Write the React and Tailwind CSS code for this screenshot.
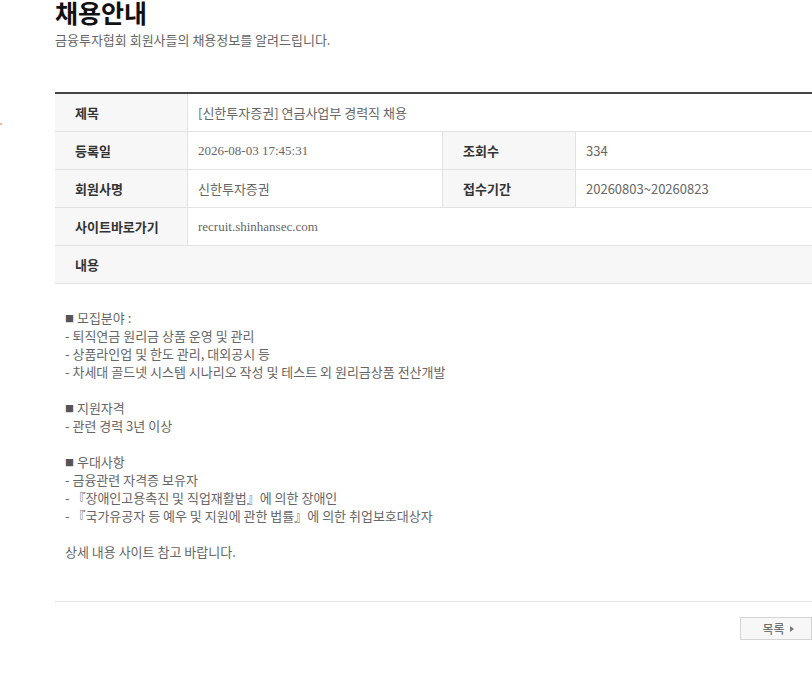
export default function App() {
  const ko = { fontFamily: '"Noto Sans CJK KR", "Noto Sans", sans-serif' };
  const serif = { fontFamily: '"Liberation Serif", "Noto Sans CJK KR", serif' };
  const num = { fontFamily: '"Noto Sans CJK KR", "Noto Sans", sans-serif' };

  const lines = [
    "■ 모집분야 :",
    "- 퇴직연금 원리금 상품 운영 및 관리",
    "- 상품라인업 및 한도 관리, 대외공시 등",
    "- 차세대 골드넷 시스템 시나리오 작성 및 테스트 외 원리금상품 전산개발",
    "",
    "■ 지원자격",
    "- 관련 경력 3년 이상",
    "",
    "■ 우대사항",
    "- 금융관련 자격증 보유자",
    "- 『장애인고용촉진 및 직업재활법』에 의한 장애인",
    "- 『국가유공자 등 예우 및 지원에 관한 법률』에 의한 취업보호대상자",
    "",
    "상세 내용 사이트 참고 바랍니다.",
  ];

  const label = "w-[133px] shrink-0 bg-[#f7f7f7] border-r border-[#e2e2e2] pl-[20px] flex items-center text-[13px] font-bold text-[#333]";
  const value = "flex items-center pl-[10px] text-[13px] text-[#666]";

  return (
    <div className="relative h-[695px] w-[812px] overflow-hidden bg-white" style={ko}>
      <span className="absolute left-0 top-[123px] h-[2px] w-[2px] rounded-full bg-[#f7a070]" />
      <div className="pl-[55px] w-[960px]">
        <h1 className="text-[25px] font-bold leading-[25px] text-[#111]">채용안내</h1>
        <p className="mt-[6px] text-[13px] leading-[18px] text-[#666]">금융투자협회 회원사들의 채용정보를 알려드립니다.</p>

        <div className="mt-[43px] border-t-2 border-[#444]">
          <div className="flex h-[38px] border-b border-[#e2e2e2]">
            <div className={label}>제목</div>
            <div className={value}>[신한투자증권] 연금사업부 경력직 채용</div>
          </div>
          <div className="flex h-[38px] border-b border-[#e2e2e2]">
            <div className={label}>등록일</div>
            <div className={value + " w-[255px] border-r border-[#e2e2e2] text-[12px]"} style={serif}>2026-08-03 17:45:31</div>
            <div className={label}>조회수</div>
            <div className={value + " text-[11px]"} style={num}>334</div>
          </div>
          <div className="flex h-[38px] border-b border-[#e2e2e2]">
            <div className={label}>회원사명</div>
            <div className={value + " w-[255px] border-r border-[#e2e2e2]"}>신한투자증권</div>
            <div className={label}>접수기간</div>
            <div className={value + " text-[11px]"} style={num}>20260803~20260823</div>
          </div>
          <div className="flex h-[38px] border-b border-[#e2e2e2]">
            <div className={label}>사이트바로가기</div>
            <div className={value + " text-[12px]"} style={serif}>recruit.shinhansec.com</div>
          </div>
          <div className="flex h-[38px] border-b border-[#e2e2e2] bg-[#f7f7f7]">
            <div className="pl-[20px] flex items-center text-[13px] font-bold text-[#333]">내용</div>
          </div>
          <div className="h-[318px] border-b border-[#e2e2e2] pl-[10px] pt-[25px]">
            {lines.map((t, i) => (
              <div key={i} className="h-[18px] text-[13px] leading-[18px] text-[#666]">
                {t.startsWith("■") ? (
                  <>
                    <span className="text-[9px] align-[1px] text-[#555]">■</span>
                    {t.slice(1)}
                  </>
                ) : (
                  t
                )}
              </div>
            ))}
          </div>
        </div>

        <div className="mt-[15px] w-[757px] flex justify-end">
          <button className="flex h-[23px] w-[72px] items-center justify-center gap-[5px] pl-[4px] border border-[#d4d4d4] bg-[#f7f7f7] text-[12px] text-[#555]">
            목록
            <svg width="4" height="6" viewBox="0 0 4 6"><path d="M0 0 L4 3 L0 6 Z" fill="#777" /></svg>
          </button>
        </div>
      </div>
    </div>
  );
}
